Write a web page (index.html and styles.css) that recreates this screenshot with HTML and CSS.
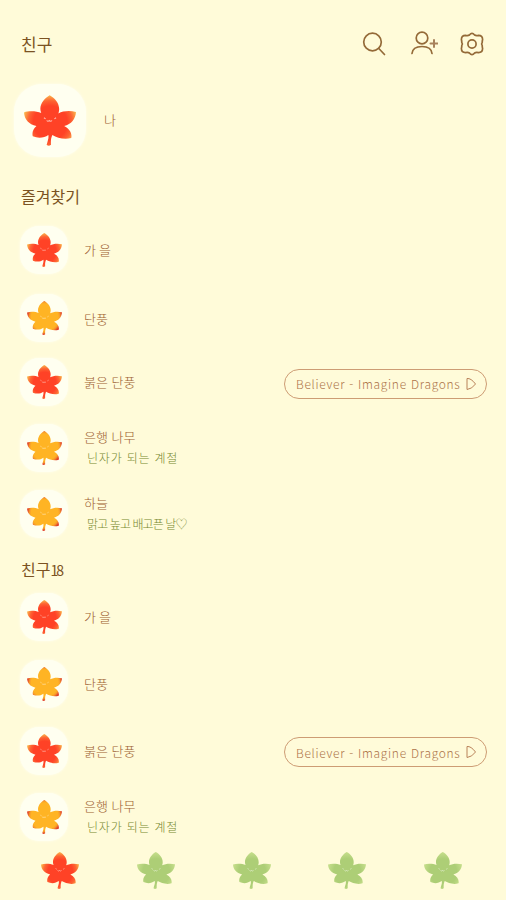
FILE: index.html
```html
<!DOCTYPE html>
<html lang="ko">

<head>
    <meta charset="UTF-8">
    <meta name="viewport" content="width=device-width, initial-scale=1.0">
    <title>친구</title>
    <link rel="stylesheet" href="styles.css">
</head>

<body>
    <!-- Shared leaf shape and its colors -->
    <svg class="defs" width="0" height="0" aria-hidden="true">
        <defs>
            <radialGradient id="leafRed" gradientUnits="userSpaceOnUse" cx="78" cy="82" r="84">
                <stop offset="0.6" stop-color="#ff4226" />
                <stop offset="0.78" stop-color="#fd6433" />
                <stop offset="1" stop-color="#fbc150" />
            </radialGradient>
            <radialGradient id="leafYellow" gradientUnits="userSpaceOnUse" cx="78" cy="72" r="76">
                <stop offset="0.78" stop-color="#ffb424" />
                <stop offset="0.88" stop-color="#f79a2b" />
                <stop offset="1" stop-color="#e0402a" />
            </radialGradient>
            <radialGradient id="leafGreen" gradientUnits="userSpaceOnUse" cx="78" cy="82" r="84">
                <stop offset="0.65" stop-color="#adce76" />
                <stop offset="1" stop-color="#c9e08e" />
            </radialGradient>
            <symbol id="leaf" viewBox="0 0 154 150">
                <path d="M76 0C58 10 42 32 51 53C38 47 14 46 0 51C1 70 14 87 37 91C27 99 23 111 26 122C42 129 60 127 72 118C74 127 70 136 67 147Q73 152 80 147C79 134 80 127 84 118C98 126 119 133 140 127C143 113 135 99 119 91C140 87 153 70 154 50C136 45 115 47 102 54C110 31 95 10 76 0Z" />
                <path class="face" d="M59 67l5 3M90 70l5-3M67 75q4 4 8 0q4 4 8 0" />
            </symbol>
        </defs>
    </svg>

    <header class="header">
        <h1>친구</h1>
        <div class="header-icons">
            <svg class="icon" viewBox="0 0 26 26"><circle cx="10.500" cy="11" r="8.800" /><path d="M16.800 17.500L22.500 23.500" /></svg>
            <svg class="icon icon-add" viewBox="0 0 28 26"><circle cx="12" cy="7" r="5.800" /><path d="M2 22.500c.5-5.500 4.500-7 10-7s9.500 1.500 10 7" /><path class="plus" d="M24 9v7M20.500 12.500h7" /></svg>
            <svg class="icon" viewBox="0 0 26 26"><path d="M9.400 4Q12 .800 14.600 4Q16 5 18.500 4.400Q22.500 4.500 22.600 8.500Q22.200 10 22.200 11.500Q21 13 22.200 14.500Q22.200 16 22.600 17.500Q22.500 21.500 18.500 21.600Q16 21 14.600 22Q12 25.200 9.400 22Q8 21 5.500 21.600Q1.500 21.500 1.400 17.500Q1.800 16 1.800 14.500Q3 13 1.800 11.500Q1.800 10 1.400 8.500Q1.500 4.500 5.500 4.400Q8 5 9.400 4Z" /><circle cx="12" cy="13" r="4.100" /></svg>
        </div>
    </header>

    <div class="me">
        <div class="avatar avatar-big"><svg class="leaf" fill="url(#leafRed)"><use href="#leaf" /></svg></div>
        <span class="name">나</span>
    </div>

    <h2>즐겨찾기</h2>
    <ul class="friends favorites">
        <li>
            <div class="avatar"><svg class="leaf" fill="url(#leafRed)"><use href="#leaf" /></svg></div>
            <div class="info"><span class="name wide">가을</span></div>
        </li>
        <li class="lower">
            <div class="avatar"><svg class="leaf" fill="url(#leafYellow)"><use href="#leaf" /></svg></div>
            <div class="info"><span class="name">단풍</span></div>
        </li>
        <li>
            <div class="avatar"><svg class="leaf" fill="url(#leafRed)"><use href="#leaf" /></svg></div>
            <div class="info"><span class="name">붉은 단풍</span></div>
            <div class="music"><span>Believer - Imagine Dragons</span><svg viewBox="0 0 12 14"><path d="M2 1.500Q6 1 10.500 7Q7 12 2 12.500Z" /></svg></div>
        </li>
        <li>
            <div class="avatar"><svg class="leaf" fill="url(#leafYellow)"><use href="#leaf" /></svg></div>
            <div class="info"><span class="name">은행 나무</span><span class="status">닌자가 되는 계절</span></div>
        </li>
        <li>
            <div class="avatar"><svg class="leaf" fill="url(#leafYellow)"><use href="#leaf" /></svg></div>
            <div class="info"><span class="name">하늘</span><span class="status tight">맑고 높고 배고픈 날♡</span></div>
        </li>
    </ul>

    <h2 class="count">친구<span>18</span></h2>
    <ul class="friends">
        <li>
            <div class="avatar"><svg class="leaf" fill="url(#leafRed)"><use href="#leaf" /></svg></div>
            <div class="info"><span class="name wide">가을</span></div>
        </li>
        <li>
            <div class="avatar"><svg class="leaf" fill="url(#leafYellow)"><use href="#leaf" /></svg></div>
            <div class="info"><span class="name">단풍</span></div>
        </li>
        <li>
            <div class="avatar"><svg class="leaf" fill="url(#leafRed)"><use href="#leaf" /></svg></div>
            <div class="info"><span class="name">붉은 단풍</span></div>
            <div class="music"><span>Believer - Imagine Dragons</span><svg viewBox="0 0 12 14"><path d="M2 1.500Q6 1 10.500 7Q7 12 2 12.500Z" /></svg></div>
        </li>
        <li>
            <div class="avatar"><svg class="leaf" fill="url(#leafYellow)"><use href="#leaf" /></svg></div>
            <div class="info"><span class="name">은행 나무</span><span class="status">닌자가 되는 계절</span></div>
        </li>
    </ul>

    <nav class="tabs">
        <svg class="leaf active" fill="url(#leafRed)"><use href="#leaf" /></svg>
        <svg class="leaf" fill="url(#leafGreen)"><use href="#leaf" /></svg>
        <svg class="leaf" fill="url(#leafGreen)"><use href="#leaf" /></svg>
        <svg class="leaf" fill="url(#leafGreen)"><use href="#leaf" /></svg>
        <svg class="leaf" fill="url(#leafGreen)"><use href="#leaf" /></svg>
    </nav>
</body>

</html>
```

FILE: styles.css
```css
* {
    margin: 0;
    padding: 0;
    box-sizing: border-box;
}

body {
    width: 506px;
    height: 900px;
    overflow: hidden;
    display: flex;
    flex-direction: column;
    font-family: "Noto Sans CJK KR", sans-serif;
    background-color: #fffbd9;
    color: #9c6030;
}

.defs {
    flex: none;
}

/* Header */
.header {
    height: 83px;
    padding: 4px 20px 0 21px;
    display: flex;
    align-items: center;
    justify-content: space-between;
}

h1,
h2 {
    font-weight: 400;
    color: #7b5222;
}

h1 {
    font-size: 17px;
}

.header-icons {
    display: flex;
    gap: 22px;
}

.icon {
    width: 26px;
    height: 26px;
    fill: none;
    stroke: #946a38;
    stroke-width: 1.7;
    stroke-linecap: round;
    stroke-linejoin: round;
}

.icon-add {
    width: 28px;
}

.plus {
    stroke: #a8825b;
    stroke-width: 2;
}

/* My profile */
.me {
    height: 74px;
    padding-left: 14px;
    display: flex;
    align-items: center;
    gap: 18px;
}

.avatar {
    flex: none;
    width: 48px;
    height: 48px;
    border-radius: 19px;
    background-color: #fffff0;
    box-shadow: 0 0 3px #fffff0;
    display: flex;
    align-items: center;
    justify-content: center;
}

.avatar-big {
    width: 72px;
    height: 73px;
    border-radius: 28px;
}

.leaf {
    width: 35px;
    height: 34px;
}

.avatar-big .leaf {
    width: 52px;
    height: 51px;
}

.face {
    fill: none;
    stroke: #ffffff;
    stroke-opacity: 0.65;
    stroke-width: 3;
}

/* Friend lists */
h2 {
    height: 60px;
    padding: 10px 0 0 21px;
    font-size: 16px;
    line-height: 58px;
}

.friends {
    list-style: none;
}

.friends li {
    height: 66.7px;
    padding: 0 19px 0 20px;
    display: flex;
    align-items: center;
}

.favorites li {
    height: 66px;
}

.favorites .lower {
    padding-top: 3px;
}

.lower .info {
    padding-top: 3px;
}

.info {
    flex: 1;
    margin-left: 16px;
    display: flex;
    flex-direction: column;
}

.name {
    font-size: 13px;
    font-weight: 300;
    line-height: 20px;
}

.name.wide {
    letter-spacing: 3px;
}

.status {
    padding-left: 3px;
    font-size: 12px;
    font-weight: 300;
    line-height: 22px;
    letter-spacing: 0.8px;
    color: #77882f;
}

.status.tight {
    letter-spacing: -0.9px;
}

.music {
    width: 203px;
    height: 30px;
    margin-top: 3px;
    padding: 0 9px 0 11px;
    border: 1px solid #cd9c74;
    border-radius: 15px;
    display: flex;
    align-items: center;
    justify-content: space-between;
    font-size: 12px;
    font-weight: 300;
    letter-spacing: 0.7px;
    white-space: nowrap;
    color: #ad7449;
}

.music svg {
    width: 12px;
    height: 14px;
    fill: none;
    stroke: #b98259;
}

.count {
    height: 37px;
    padding-top: 0;
    line-height: 44px;
}

.count span {
    font-size: 14px;
    letter-spacing: -2px;
}

/* Bottom tabs */
.tabs {
    height: 49px;
    padding: 0 44px 9px 41px;
    display: flex;
    align-items: center;
    justify-content: space-between;
}

.tabs .leaf {
    width: 38px;
    height: 37px;
}
```
